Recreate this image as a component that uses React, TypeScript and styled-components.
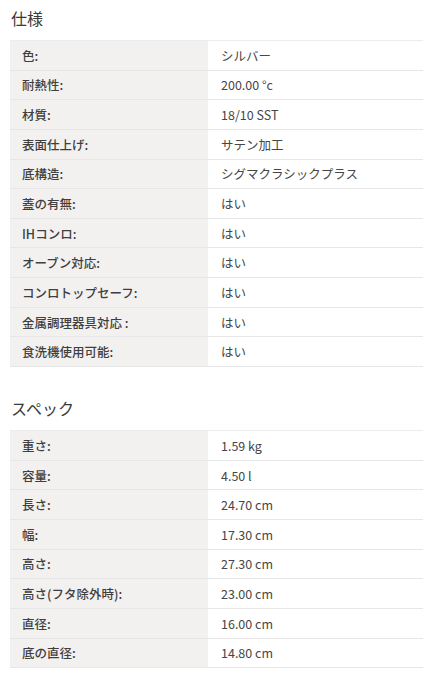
import styled, { createGlobalStyle } from 'styled-components';

type Spec = {
  label: string;
  value: string;
};

const general: Spec[] = [
  { label: '色:', value: 'シルバー' },
  { label: '耐熱性:', value: '200.00 °c' },
  { label: '材質:', value: '18/10 SST' },
  { label: '表面仕上げ:', value: 'サテン加工' },
  { label: '底構造:', value: 'シグマクラシックプラス' },
  { label: '蓋の有無:', value: 'はい' },
  { label: 'IHコンロ:', value: 'はい' },
  { label: 'オーブン対応:', value: 'はい' },
  { label: 'コンロトップセーフ:', value: 'はい' },
  { label: '金属調理器具対応 :', value: 'はい' },
  { label: '食洗機使用可能:', value: 'はい' },
];

const specs: Spec[] = [
  { label: '重さ:', value: '1.59 kg' },
  { label: '容量:', value: '4.50 l' },
  { label: '長さ:', value: '24.70 cm' },
  { label: '幅:', value: '17.30 cm' },
  { label: '高さ:', value: '27.30 cm' },
  { label: '高さ(フタ除外時):', value: '23.00 cm' },
  { label: '直径:', value: '16.00 cm' },
  { label: '底の直径:', value: '14.80 cm' },
];

const GlobalStyle = createGlobalStyle`
  html, body {
    margin: 0;
    padding: 0;
    background: #fff;
  }
  body {
    font-family: "Noto Sans CJK JP", "Noto Sans", sans-serif;
    color: #444;
  }
`;

const SpecTable = ({ title, rows }: { title: string; rows: Spec[] }) => (
  <Section>
    <Title>{title}</Title>
    <Table>
      {rows.map(row => (
        <Row key={row.label}>
          <Label>{row.label}</Label>
          <Value>{row.value}</Value>
        </Row>
      ))}
    </Table>
  </Section>
);

const App = () => (
  <>
    <GlobalStyle />
    <Page>
      <SpecTable title='仕様' rows={general} />
      <SpecTable title='スペック' rows={specs} />
    </Page>
  </>
);

const Page = styled.div`
  display: flex;
  flex-direction: column;
  gap: 29px;
  padding: 6px 10px 0 10px;
  width: 413px;
`;

const Section = styled.section`
  display: flex;
  flex-direction: column;
`;

const Title = styled.h2`
  margin: 0 0 10px 1px;
  font-size: 16px;
  font-weight: 400;
  line-height: 24px;
  color: #3a3a3a;
`;

const Table = styled.div`
  display: flex;
  flex-direction: column;
  border-top: 1px solid #ececec;
`;

const Row = styled.div`
  display: grid;
  grid-template-columns: 198px 1fr;
  height: 29.65px;
  box-sizing: border-box;
  border-bottom: 1px solid #e6e6e6;
  font-size: 12.5px;
`;

const Label = styled.div`
  display: flex;
  align-items: center;
  padding-left: 12px;
  background: #f2f1ef;
  color: #3f3f3f;
  font-weight: 500;
`;

const Value = styled.div`
  display: flex;
  align-items: center;
  padding-left: 13px;
  color: #464646;
`;

export default App;
